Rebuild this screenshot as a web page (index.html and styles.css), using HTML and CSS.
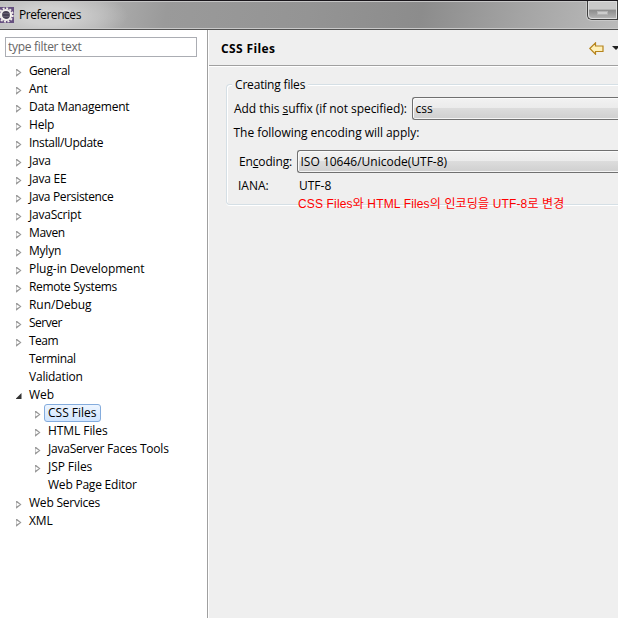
FILE: index.html
```html
<!DOCTYPE html>
<html lang="ko">
<head>
<meta charset="utf-8">
<title>Preferences</title>
<link rel="stylesheet" href="styles.css">
</head>
<body>
<div class="window">
  <header class="titlebar">
    <svg class="app-icon" width="14" height="16" viewBox="0 0 14 16">
      <rect width="14" height="16" fill="#665080"/>
      <circle cx="6" cy="8" r="6.7" fill="none" stroke="#f0ece8" stroke-width="2" stroke-dasharray="2 1.5"/>
      <circle cx="6" cy="8" r="5" fill="#494354" stroke="#f3f1ed" stroke-width="2.2"/>
      <path d="M3 6.5h6M3 9.5h6" stroke="#777080" stroke-width=".6"/>
    </svg>
    <span class="title">Preferences</span>
    <div class="controls"><button class="minimize" aria-label="Minimize"><i></i></button><span class="maximize"></span></div>
  </header>
  <div class="body">
    <aside class="sidebar">
      <input class="filter" placeholder="type filter text" aria-label="Filter">
      <ul class="tree">
        <li class="closed tighter"><span>General</span></li>
        <li class="closed"><span>Ant</span></li>
        <li class="closed"><span>Data Management</span></li>
        <li class="closed"><span>Help</span></li>
        <li class="closed tight"><span>Install/Update</span></li>
        <li class="closed"><span>Java</span></li>
        <li class="closed"><span>Java EE</span></li>
        <li class="closed tight"><span>Java Persistence</span></li>
        <li class="closed"><span>JavaScript</span></li>
        <li class="closed tight"><span>Maven</span></li>
        <li class="closed"><span>Mylyn</span></li>
        <li class="closed loose"><span>Plug-in Development</span></li>
        <li class="closed tight"><span>Remote Systems</span></li>
        <li class="closed loose"><span>Run/Debug</span></li>
        <li class="closed tighter"><span>Server</span></li>
        <li class="closed tighter"><span>Team</span></li>
        <li class="tight"><span>Terminal</span></li>
        <li><span>Validation</span></li>
        <li class="open loose"><span>Web</span></li>
        <li class="closed child selected"><span>CSS Files</span></li>
        <li class="closed child loose"><span>HTML Files</span></li>
        <li class="closed child"><span>JavaServer Faces Tools</span></li>
        <li class="closed child loose"><span>JSP Files</span></li>
        <li class="child"><span>Web Page Editor</span></li>
        <li class="closed"><span>Web Services</span></li>
        <li class="closed loose"><span>XML</span></li>
      </ul>
    </aside>
    <main class="page">
      <div class="page-head">
        <h1>CSS Files</h1>
        <svg class="back" width="15" height="13" viewBox="0 0 15 13"><path d="M.8 6.5 6.5 .9V4H14v5.5H6.5v2.7Z" fill="#fff0b8" stroke="#b5831c" stroke-width="1.2"/></svg>
        <svg class="drop" width="6" height="4" viewBox="0 0 6 4"><path d="M0 0h8L4 4Z" fill="#222"/></svg>
      </div>
      <section class="group">
        <h2>Creating files</h2>
        <div class="row suffix"><label>Add this <u>s</u>uffix (if not specified):</label><div class="combo"><span>css</span></div></div>
        <p class="following">The following encoding will apply:</p>
        <div class="row encoding"><label>En<u>c</u>oding:</label><div class="combo"><span>ISO 10646/Unicode(UTF-8)</span></div></div>
        <div class="row iana"><label>IANA:</label><span>UTF-8</span></div>
        <p class="note">CSS Files와 HTML Files의 인코딩을 UTF-8로 변경</p>
      </section>
    </main>
  </div>
</div>
</body>
</html>
```
FILE: styles.css
```css
* { box-sizing: border-box; }
body { margin: 0; overflow: hidden; }
.window {
  width: 618px; height: 618px; display: flex; flex-direction: column; overflow: hidden;
  background: #efefef; color: #000;
  font: 12px/18px "Open Sans", "Noto Sans CJK KR", sans-serif;
}
h1, h2, p, ul { margin: 0; padding: 0; font-size: inherit; font-weight: normal; }
.titlebar {
  height: 30px; flex: none; display: flex; align-items: flex-start;
  border-top: 1px solid #19161b; border-bottom: 1px solid #525252;
  box-shadow: inset 0 1px #c5c5c5, inset 0 -1px #c9c9c9;
  background: radial-gradient(ellipse 80px 28px at 48px 15px, #d0d0d0 30%, #d0d0d000 100%), linear-gradient(100deg, #b4b4b4 0, #b0b0b0 16%, #9a9a9a 27%, #949494 50%, #8c8c8c 68%, #a4a4a4 84%, #bababa 100%);
}
.app-icon { margin-top: 6px; flex: none; }
.title { margin: 5px 0 0 5px; letter-spacing: -.45px; }
.controls { margin-left: auto; display: flex; width: 31px; height: 19px; border: 1px solid #3d3d3d; border-width: 0 0 1px 1px; border-bottom-left-radius: 5px; box-shadow: -1px 1px #c8c8c8; }
.minimize { width: 29px; padding: 0; border: 1px solid #ddd; border-bottom-left-radius: 4px; background: linear-gradient(#c9c9c9 0 45%, #8c8c8c 50%, #b2b2b2); display: flex; align-items: center; justify-content: center; }
.minimize i { width: 11px; height: 4px; margin-top: 6px; border: 1px solid #b2b2b2; background: #ccc; }
.maximize { width: 1px; background: #3d3d3d; }
.body { flex: 1; display: flex; min-height: 0; }
.sidebar { width: 208px; flex: none; padding: 7px 0 0 5px; background: #fff; border-right: 1px solid #a0a0a0; }
.filter { display: block; width: 192px; height: 20px; padding: 0 2px 1px; border: 1px solid #abadb3; outline: 0; background: #fff; font: inherit; letter-spacing: -.3px; }
.filter::placeholder { color: #666; opacity: 1; }
.tree { list-style: none; padding-top: 5px; letter-spacing: -.22px; }
.tree li { height: 18px; display: flex; align-items: center; padding-left: 10.5px; }
.tree li.child { padding-left: 29.5px; }
.tree .loose { letter-spacing: -.07px; }
.tree .tight { letter-spacing: -.34px; }
.tree .tighter { letter-spacing: -.5px; }
.tree .selected { letter-spacing: 0; }
.tree li::before { content: ""; width: 6px; height: 8px; flex: none; margin-top: 3px; }
.tree .closed::before { background: #989898; clip-path: polygon(0 0, 1px 0, 6px 4px, 1px 8px, 0 8px, 0 1.8px, 1px 2px, 1px 6px, 4.4px 4px, 1px 2px, 0 1.8px); }
.tree .open::before { height: 6px; margin-top: 2px; background: #333; clip-path: polygon(100% 0, 100% 100%, 0 100%); }
.tree span { height: 18px; line-height: 17px; margin-left: 3.5px; padding: 0 3px; border: 1px solid transparent; border-width: 0 1px; white-space: nowrap; }
.tree .selected span { line-height: 15px; border: 1px solid #84acdd; border-radius: 3px; background: linear-gradient(#edf5ff, #d0e5ff); }
.page { flex: 1; min-width: 0; border-left: 1px solid #fff; background: #efefef; }
.page-head { height: 36px; display: flex; align-items: center; border-bottom: 1px solid #a0a0a0; box-shadow: 0 1px #fff; padding-left: 12px; }
.page-head h1 { font-weight: 700; padding-top: 3px; letter-spacing: .38px; }
.back { margin: 1px 0 0 auto; flex: none; }
.drop { margin: 1px 0 0 8px; flex: none; }
.group { height: 121px; margin: 18px 0 0 17px; border: 1px solid #d5dfe5; border-right: 0; border-radius: 4px 0 0 4px; box-shadow: inset 1px 1px #fff, 0 1px #fff; }
.group h2 { width: max-content; height: 18px; line-height: 18px; margin: -9px 0 0 5px; padding: 0 3px; background: #efefef; letter-spacing: -.18px; }
.row { display: flex; align-items: center; white-space: nowrap; }
.suffix { margin-top: 3px; height: 23px; padding-left: 7px; }
.suffix label { width: 178px; letter-spacing: -.05px; }
.combo { flex: 1; height: 23px; border: 1px solid #707070; border-right: 0; border-radius: 3px 0 0 3px; box-shadow: inset 1px 1px #fafafa, inset 0 -1px #f4f4f4; background: linear-gradient(#f2f2f2, #ebebeb 49%, #dcdcdc 50%, #cfcfcf); padding-left: 2.5px; line-height: 21px; }
.following { margin: 4px 0 0 6.5px; letter-spacing: -.04px; }
.encoding { margin-top: 8px; height: 23px; padding-left: 12px; }
.encoding label { width: 58px; letter-spacing: -.15px; }
.iana { margin-top: 4px; height: 18px; padding-left: 11px; }
.iana label { width: 61px; }
.note { margin-left: 71px; color: #f00; white-space: nowrap; font-family: "Liberation Sans", "Noto Sans CJK KR", sans-serif; letter-spacing: .15px; }
u { text-underline-offset: 1px; }
```
